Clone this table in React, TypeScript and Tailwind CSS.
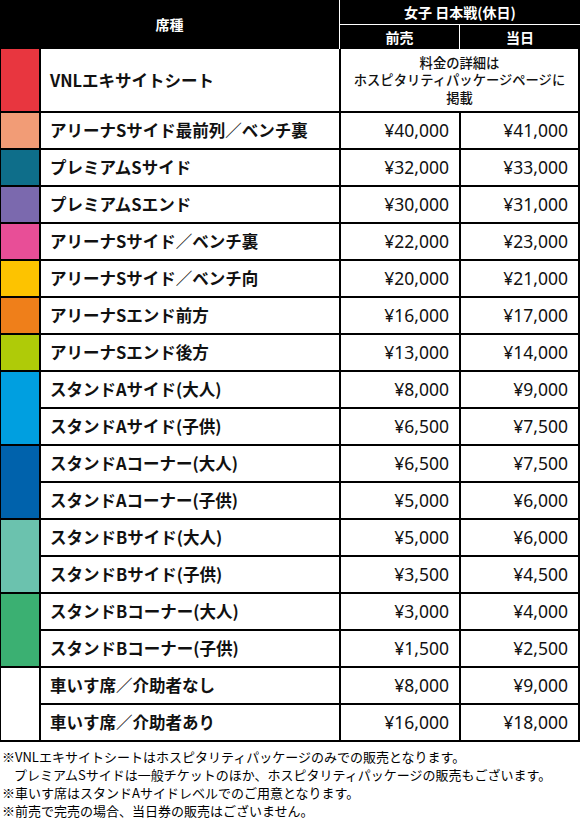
import React from 'react';

type Row = {
  name: string;
  color?: string;
  span?: number;
  advance?: string;
  dayOf?: string;
};

const rows: Row[] = [
  { name: 'アリーナSサイド最前列／ベンチ裏', color: 'bg-[#f29c76]', advance: '¥40,000', dayOf: '¥41,000' },
  { name: 'プレミアムSサイド', color: 'bg-[#0e6e8a]', advance: '¥32,000', dayOf: '¥33,000' },
  { name: 'プレミアムSエンド', color: 'bg-[#7b69ae]', advance: '¥30,000', dayOf: '¥31,000' },
  { name: 'アリーナSサイド／ベンチ裏', color: 'bg-[#e84e97]', advance: '¥22,000', dayOf: '¥23,000' },
  { name: 'アリーナSサイド／ベンチ向', color: 'bg-[#fdc300]', advance: '¥20,000', dayOf: '¥21,000' },
  { name: 'アリーナSエンド前方', color: 'bg-[#ef7f1a]', advance: '¥16,000', dayOf: '¥17,000' },
  { name: 'アリーナSエンド後方', color: 'bg-[#afcb08]', advance: '¥13,000', dayOf: '¥14,000' },
  { name: 'スタンドAサイド(大人)', color: 'bg-[#009fe0]', span: 2, advance: '¥8,000', dayOf: '¥9,000' },
  { name: 'スタンドAサイド(子供)', advance: '¥6,500', dayOf: '¥7,500' },
  { name: 'スタンドAコーナー(大人)', color: 'bg-[#0062ac]', span: 2, advance: '¥6,500', dayOf: '¥7,500' },
  { name: 'スタンドAコーナー(子供)', advance: '¥5,000', dayOf: '¥6,000' },
  { name: 'スタンドBサイド(大人)', color: 'bg-[#6bc2ae]', span: 2, advance: '¥5,000', dayOf: '¥6,000' },
  { name: 'スタンドBサイド(子供)', advance: '¥3,500', dayOf: '¥4,500' },
  { name: 'スタンドBコーナー(大人)', color: 'bg-[#3bb072]', span: 2, advance: '¥3,000', dayOf: '¥4,000' },
  { name: 'スタンドBコーナー(子供)', advance: '¥1,500', dayOf: '¥2,500' },
  { name: '車いす席／介助者なし', color: 'bg-white', span: 2, advance: '¥8,000', dayOf: '¥9,000' },
  { name: '車いす席／介助者あり', advance: '¥16,000', dayOf: '¥18,000' },
];

const jp = "font-['Noto_Sans_CJK_JP','Noto_Sans',sans-serif]";

export default function App() {
  return (
    <div className={`w-[580px] bg-white text-[#111] ${jp}`}>
      {/* Header */}
      <div className="flex h-[49px] bg-black text-white text-[14px] font-bold">
        <div className="flex w-[339px] items-center justify-center">席種</div>
        <div className="w-[1px] bg-white" />
        <div className="flex flex-1 flex-col">
          <div className="flex h-[24px] items-center justify-center">女子 日本戦(休日)</div>
          <div className="h-[1px] bg-white" />
          <div className="flex flex-1">
            <div className="flex w-[119px] items-center justify-center">前売</div>
            <div className="w-[1px] bg-white" />
            <div className="flex flex-1 items-center justify-center">当日</div>
          </div>
        </div>
      </div>

      {/* Body */}
      <div className="grid grid-cols-[38px_298px_118px_117px] grid-rows-[62px_repeat(17,35px)] gap-[2px] bg-black pl-[1px] pr-[2px] pb-[2px]">
        <div className="bg-[#e8363f]" />
        <div className="flex items-center bg-white pl-[9px] text-[16.5px] font-bold">VNLエキサイトシート</div>
        <div className="col-span-2 flex items-center justify-center bg-white">
          <p className="text-center text-[13.3px] font-medium leading-[17.5px]">
            料金の詳細は
            <br />
            ホスピタリティパッケージページに
            <br />
            掲載
          </p>
        </div>

        {rows.map((r) => (
          <React.Fragment key={r.name}>
            {r.color && <div className={`${r.color} ${r.span === 2 ? 'row-span-2' : ''}`} />}
            <div className="col-start-2 flex items-center bg-white pl-[9px] text-[16.5px] font-bold whitespace-nowrap">
              {r.name}
            </div>
            <div className="flex items-center justify-end bg-white pr-[10px] font-['Noto_Sans',sans-serif] text-[17.5px]">
              {r.advance}
            </div>
            <div className="flex items-center justify-end bg-white pr-[10px] font-['Noto_Sans',sans-serif] text-[17.5px]">
              {r.dayOf}
            </div>
          </React.Fragment>
        ))}
      </div>

      {/* Notes */}
      <div className="mt-[6px] pl-[2px] text-[13px] leading-[18px] text-black">
        <p>※VNLエキサイトシートはホスピタリティパッケージのみでの販売となります。</p>
        <p className="pl-[12px]">プレミアムSサイドは一般チケットのほか、ホスピタリティパッケージの販売もございます。</p>
        <p>※車いす席はスタンドAサイドレベルでのご用意となります。</p>
        <p>※前売で完売の場合、当日券の販売はございません。</p>
      </div>
    </div>
  );
}
